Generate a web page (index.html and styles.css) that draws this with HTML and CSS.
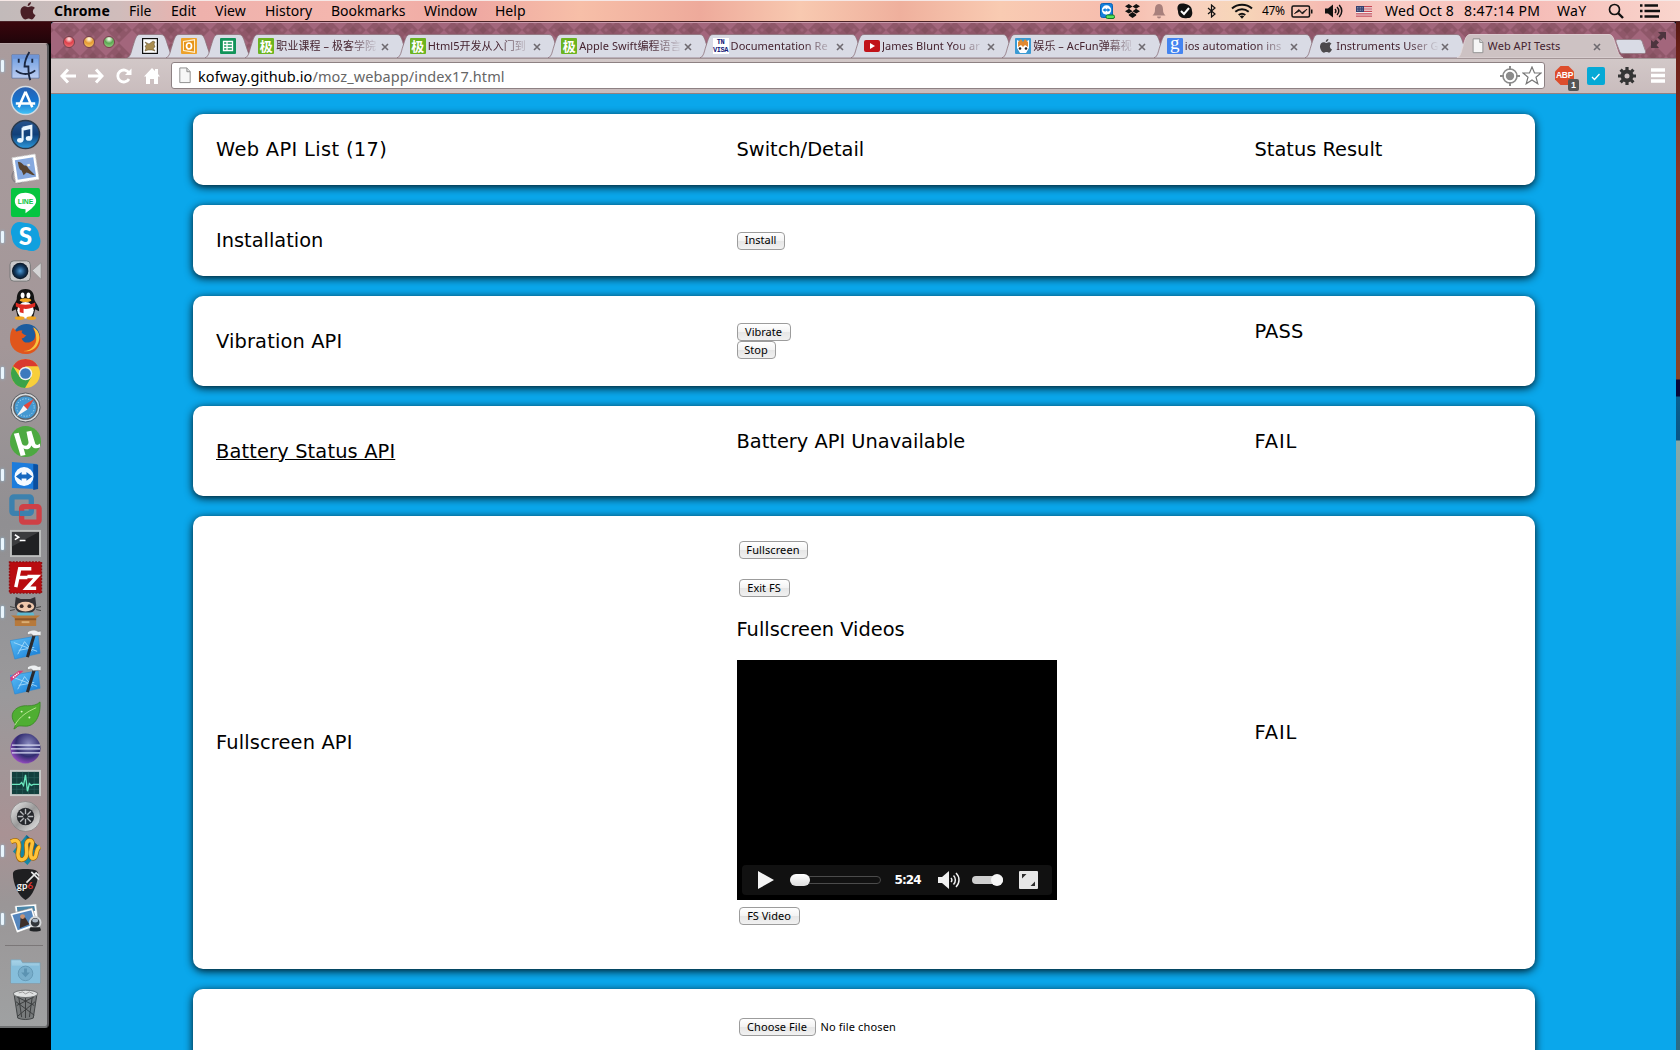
FILE: index.html
```
<!DOCTYPE html>
<html lang="en">
<head>
<meta charset="utf-8">
<title>Web API Tests</title>
<link rel="stylesheet" href="styles.css">
</head>
<body>
<svg class="defs" width="0" height="0" aria-hidden="true">
  <defs>
    <pattern id="damask" width="26" height="26" patternUnits="userSpaceOnUse" x="3" y="-6">
      <rect width="26" height="26" fill="#a3667c"/>
      <path d="M13 0 26 13 13 26 0 13Z" fill="#8f5769"/>
      <circle cx="13" cy="6" r="1.7" fill="#9d6377"/><circle cx="13" cy="20" r="1.7" fill="#9d6377"/>
      <circle cx="6" cy="13" r="1.7" fill="#9d6377"/><circle cx="20" cy="13" r="1.7" fill="#9d6377"/>
      <path d="M13 9l4 4-4 4-4-4Z" fill="#84505f"/>
    </pattern>
    <linearGradient id="blueball" x1="0" y1="0" x2="0" y2="1"><stop offset="0" stop-color="#2a5fae"/><stop offset=".5" stop-color="#1573cf"/><stop offset="1" stop-color="#44c4f7"/></linearGradient>
    <linearGradient id="navyball" x1="0" y1="0" x2="0" y2="1"><stop offset="0" stop-color="#27548e"/><stop offset=".5" stop-color="#104079"/><stop offset="1" stop-color="#2c9ade"/></linearGradient>
    <linearGradient id="silver" x1="0" y1="0" x2="1" y2="1"><stop offset="0" stop-color="#eee"/><stop offset=".5" stop-color="#999"/><stop offset="1" stop-color="#eee"/></linearGradient>
    <linearGradient id="finder" x1="0" y1="0" x2="0" y2="1"><stop offset="0" stop-color="#6a9be0"/><stop offset="1" stop-color="#bccdf1"/></linearGradient>
    <linearGradient id="blueprint" x1="0" y1="0" x2="1" y2="1"><stop offset="0" stop-color="#62c3f7"/><stop offset="1" stop-color="#1279d6"/></linearGradient>
    <linearGradient id="folder" x1="0" y1="0" x2="0" y2="1"><stop offset="0" stop-color="#a8d3e8"/><stop offset="1" stop-color="#6aa8c9"/></linearGradient>
    <radialGradient id="eclipse" cx=".6" cy=".35" r=".7"><stop offset="0" stop-color="#8a8cc0"/><stop offset=".6" stop-color="#312c70"/><stop offset="1" stop-color="#a04fc9"/></radialGradient>
    <radialGradient id="lens"><stop offset="0" stop-color="#4c9ad6"/><stop offset=".6" stop-color="#123a60"/><stop offset="1" stop-color="#0a1420"/></radialGradient>
    <symbol id="tab-wide" viewBox="0 0 166 24"><path d="M0 24C4 22 4 18 6 12S9 .5 13 .5H152C156 .5 157 6 159 12s3 10 7 12Z" fill="#d9dbe5" stroke="#8b7078" stroke-width=".8"/></symbol>
    <symbol id="tab-pin" viewBox="0 0 48 24"><path d="M0 24C4 22 4 18 6 12S9 .5 13 .5H34C38 .5 39 6 41 12s3 10 7 12Z" fill="#d9dbe5" stroke="#8b7078" stroke-width=".8"/></symbol>
    <symbol id="tab-live" viewBox="0 0 166 24"><path d="M0 24C4 22 4 18 6 12S9 .5 13 .5H152C156 .5 157 6 159 12s3 10 7 12Z" fill="#cdc2c3" stroke="#e5dcdd" stroke-width=".8"/></symbol>
    <symbol id="close" viewBox="0 0 8 8"><path d="M1 1 7 7M7 1 1 7" stroke="#6e6a70" stroke-width="1.6" fill="none"/></symbol>
    <symbol id="page" viewBox="0 0 14 18"><path d="M1.500 1H9l3.500 4V16.500H1.500Z" fill="#f6f6f6" stroke="#8b8b8b" stroke-width="1"/><path d="M9 1v4h3.500" fill="#ddd" stroke="#8b8b8b"/></symbol>
    <symbol id="apple" viewBox="0 0 16 18"><path d="M11 0c.2 2-1.500 4-3.300 4C7.500 2 9.200.3 11 0ZM8 5.200c.8 0 1.800-1 3.500-1 1.300 0 2.600.7 3.400 1.900-3 1.700-2.500 5.900.6 7-.7 1.900-2.200 4.300-3.700 4.300-1.200 0-1.600-.8-3.200-.8s-2 .8-3.200.8C3 17.400.5 13 .5 9.700.5 6 2.800 4.300 5 4.300c1.400 0 2.300.9 3 .9Z"/></symbol>
    <symbol id="xcode" viewBox="0 0 32 32"><path d="M0 11 29 6l2 18-26 6Z" fill="url(#blueprint)" stroke="#2387d5" stroke-width=".6"/><path d="M8 25 15 12l8 10M9 21l16-3M4 13l24 9" fill="none" stroke="#a8dcfb" stroke-width=".9"/><path d="M25 5 18 28" stroke="#2b2b2e" stroke-width="3.200"/><path d="M18 2.500C21-.5 26-.5 29 1.500l3-.5v5l-3-.5-5 .5-2-2-4 1Z" fill="#eef0f2" stroke="#777" stroke-width=".6"/></symbol>
  </defs>
</svg>

<header class="menubar">
  <svg class="mb-apple" width="16" height="18"><use href="#apple"/></svg>
  <nav class="mb-menus">
    <b class="w-chrome">Chrome</b><span class="w-file">File</span><span class="w-edit">Edit</span><span class="w-view">View</span><span class="w-history">History</span><span class="w-book">Bookmarks</span><span class="w-window">Window</span><span>Help</span>
  </nav>
  <div class="mb-status">
    <svg class="st-tv" width="15" height="16" viewBox="0 0 15 16"><rect x=".5" y=".5" width="12" height="14" rx="2" fill="#1480dc" stroke="#0b62b4"/><circle cx="6.500" cy="7" r="4.700" fill="#fff"/><path d="M2.500 7l3-2v1.300h2V5l3 2-3 2V7.700h-2V9Z" fill="#1480dc"/><rect x="6" y="12" width="8.500" height="3.500" rx="1.500" fill="#52e35b" stroke="#167722"/></svg>
    <svg class="st-db" width="17" height="16" viewBox="0 0 17 15"><path d="M4.800.5 8.500 3 5 5.300 1 2.800ZM12.200.5 8.500 3 12 5.300l4-2.500ZM1 7.700l4-2.400L8.500 7.700 4.800 10ZM16 7.700l-4-2.400-3.500 2.400L12.200 10ZM4.800 11l3.700-2.400L12.200 11v1L8.500 14.500 4.800 12Z"/></svg>
    <svg class="st-bell" width="14" height="15" viewBox="0 0 14 15"><path d="M7 0c3 .3 4 2.600 4 5.500 0 3 .8 4.500 2.500 6H.5C2.200 10 3 8.500 3 5.500 3 2.600 4 .3 7 0ZM5 12.500h4a2 2 0 0 1-4 0Z" fill="#a8807c"/></svg>
    <svg class="st-sky" width="16" height="16" viewBox="0 0 16 16"><path d="M5 .5c5 0 10 2 10 7.500 1 3-.5 7.500-4.500 7C4 16 1 13 1 8-.5 4 1 .5 5 .5Z" fill="#121212"/><path d="M4 8l3 3 5-6" fill="none" stroke="#fff" stroke-width="2"/></svg>
    <svg class="st-bt" width="9" height="14" viewBox="0 0 9 14"><path d="M1 4l7 6-3.500 3V1L8 4 1 10" fill="none" stroke="#111" stroke-width="1.200"/></svg>
    <svg class="st-wifi" width="22" height="16" viewBox="0 0 22 16"><g fill="none" stroke="#111" stroke-width="2"><path d="M1 5.500C6.500.5 15.500.5 21 5.500"/><path d="M4.300 8.800c4-3.300 9.400-3.300 13.400 0"/><path d="M7.700 12c2-1.600 4.600-1.600 6.600 0"/></g><path d="M8.800 13.300c1.300-1 3.100-1 4.400 0L11 15.800Z"/></svg>
    <span class="st-pct">47%</span>
    <svg class="st-bat" width="22" height="13" viewBox="0 0 22 13"><rect x="1" y="1" width="17.500" height="11" rx="1.500" fill="none" stroke="#111" stroke-width="1.500"/><path d="M20 4.500h1.500v4H20Z"/><path d="M3.500 8.500 8 4.500l3 3.200 5-3.500-4.500 4.900-3-3Z" stroke="#111" stroke-width=".8"/></svg>
    <svg class="st-vol" width="19" height="14" viewBox="0 0 19 14"><path d="M1 4.500h3L9 .5v13L4 9.500H1Z"/><g fill="none" stroke="#111" stroke-width="1.500"><path d="M11 5c1.200 1.200 1.200 3 0 4M13 3c2.400 2.300 2.400 6 0 8M15.200 1c3.400 3.600 3.400 8.500 0 12"/></g></svg>
    <svg class="st-flag" width="16" height="11" viewBox="0 0 16 11"><path fill="#f2eaea" d="M0 0h16v11H0Z"/><path d="M0 .7h16M0 3h16M0 5.400h16M0 7.800h16M0 10.200h16" stroke="#c64654" stroke-width="1.200"/><path fill="#34406f" d="M0 0h8v6H0Z"/><path d="M1 1.500h6M1 3h6M1 4.500h6" stroke="#c9cce0" stroke-width=".6" stroke-dasharray=".8 .8"/></svg>
    <span class="st-date">Wed Oct 8</span>
    <span class="st-time">8:47:14 PM</span>
    <span class="st-user">WaY</span>
    <svg class="st-find" width="16" height="16" viewBox="0 0 16 16"><circle cx="6.500" cy="6.500" r="5" fill="none" stroke="#111" stroke-width="1.700"/><path d="M10 10l5 5" stroke="#111" stroke-width="2.400"/></svg>
    <svg class="st-list" width="20" height="14" viewBox="0 0 20 14"><path d="M0 1.500h2.500M0 7h2.500M0 12.500h2.500M4.500 1.500H18M4.500 7H20M4.500 12.500H19" stroke="#111" stroke-width="2.600"/></svg>
  </div>
</header>

<div class="desktop">
<aside class="dock-col">
<div class="dock">
  <div class="app run"><svg viewBox="0 0 32 32"><path d="M2 4h28v24H2Z" fill="url(#finder)" stroke="#44639c" stroke-width=".6"/><path d="M2 4h28v4H2Z" fill="#6f95d6"/><path d="M20 1c-3 5-5 9-5 15h4c0 5 0 10 2 14M6 20c6 5 14 5 20 0M9 8v4M23 8v4" fill="none" stroke="#1b2741" stroke-width="1.900"/></svg></div>
  <div class="app"><svg viewBox="0 0 32 32"><circle cx="16" cy="16" r="14.500" fill="url(#blueball)" stroke="#d4dbe2" stroke-width="1.500"/><path d="M16 7 9 23M16 7l7 16M6 19h20" stroke="#fff" stroke-width="2.600" fill="none"/></svg></div>
  <div class="app"><svg viewBox="0 0 32 32"><circle cx="16" cy="16" r="14.500" fill="url(#navyball)" stroke="#2b3a4b" stroke-width="1.500"/><path d="M13 9l9-2v13M13 9v13M13 11l9-2" fill="none" stroke="#e9f6ff" stroke-width="2.200"/><ellipse cx="10.500" cy="22" rx="3.200" ry="2.500" fill="#e9f6ff"/><ellipse cx="19.500" cy="20" rx="3.200" ry="2.500" fill="#e9f6ff"/></svg></div>
  <div class="app"><svg viewBox="0 0 32 32"><circle cx="9" cy="24" r="7" fill="none" stroke="#858087" stroke-width="1.500"/><path d="M2 5 26 1l4 26-24 4Z" fill="#fff" stroke="#ccc" stroke-dasharray="1.500 1"/><path d="M5 7.500 24 4.500l3 20-19 3.200Z" fill="#86a9df"/><path d="M8 9c4 0 5 3 7 4 3 0 3 2 5 4l6 6c-4 0-7-3-9-3l-3 3-2-5c-3-1-3-5-4-9Z" fill="#57432f"/><path d="M17 12l3-1 1 2-2 1Z" fill="#f4efe2"/></svg></div>
  <div class="app"><svg viewBox="0 0 32 32"><rect x="1" y="1" width="30" height="30" rx="2" fill="#05c540"/><path d="M16 6c7 0 11 3.800 11 8.500 0 4-4.500 8-11 12.500v-4C9 23 5 19.500 5 14.500S9 6 16 6Z" fill="#fff"/><text x="16" y="17.500" text-anchor="middle" class="ic-line">LINE</text></svg></div>
  <div class="app run"><svg viewBox="0 0 32 32"><path d="M10 1c3 0 4 1 6 1 8 0 14 6 14 13 2 4 2 8 0 12-3 4-8 5-13 3C9 30 2 24 2 16-1 9 3 1 10 1Z" fill="#10a0df"/><text x="16" y="24.500" text-anchor="middle" class="ic-skype">S</text></svg></div>
  <div class="app"><svg viewBox="0 0 32 32"><rect x="0" y="6" width="21" height="21" rx="4" fill="#c9c9ca" stroke="#777"/><path d="M23 16l9-8v17Z" fill="#d5d5d6" stroke="#888" stroke-width=".6"/><circle cx="10.500" cy="16.500" r="8.500" fill="url(#lens)"/></svg></div>
  <div class="app"><svg viewBox="0 0 32 32"><path d="M16 0c7 0 9 5 9 10 0 3 6 8 5 13l-4-2-2 8H8l-2-8-4 2c-1-5 5-10 5-13C7 5 9 0 16 0Z" fill="#131313"/><ellipse cx="16" cy="22" rx="8.500" ry="8.500" fill="#fff"/><ellipse cx="13" cy="6.500" rx="2" ry="3" fill="#fff"/><ellipse cx="19" cy="6.500" rx="2" ry="3" fill="#fff"/><ellipse cx="16" cy="11.500" rx="6" ry="2" fill="#f0a521"/><path d="M6 14c6 3 14 3 20 0v4c-4 2-8 3-12 2.500V25l-4-1v-4.500L6 18Z" fill="#df2b22"/><ellipse cx="10" cy="30" rx="5" ry="2" fill="#f0a521"/><ellipse cx="22" cy="30" rx="5" ry="2" fill="#f0a521"/></svg></div>
  <div class="app"><svg viewBox="0 0 32 32"><circle cx="17" cy="15" r="14" fill="#1c5c9f"/><path d="M3 5l4 4c3-2 5-1 6-1-3 2 2 4 4 5-2 1-2 3-5 3 2 6 9 5 13 1 2-4 1-9-2-12 7 3 9 9 8 15-2 8-8 12-15 12C7 32 0 25 0 17 0 12 1 8 3 5Z" fill="#e0561c"/><path d="M24 4c7 4 8 12 4 19-3 5-9 7-14 6 8 0 14-7 13-14 0-5-2-8-3-11Z" fill="#f9c440"/></svg></div>
  <div class="app run"><svg viewBox="0 0 32 32"><circle cx="16" cy="16" r="15" fill="#f8cf3b"/><path d="M16 16 3 8.500A15 15 0 0 1 29 8.500H16Z" fill="#d93a2f"/><path d="M3 8.500A15 15 0 0 0 15.500 31L22 19.500H10Z" fill="#3ba349"/><circle cx="16" cy="16" r="7" fill="#efefef"/><circle cx="16" cy="16" r="5.500" fill="#3d79bd"/></svg></div>
  <div class="app"><svg viewBox="0 0 32 32"><circle cx="16" cy="16" r="15" fill="#d7d9db" stroke="#54585c"/><circle cx="16" cy="16" r="12" fill="#4398d1" stroke="#5a6066" stroke-width="1.500"/><circle cx="16" cy="16" r="9" fill="none" stroke="#cbe6f5" stroke-dasharray="1 2"/><path d="M25 7 18 18l-4-4Z" fill="#e2473a"/><path d="M7 25l7-11 4 4Z" fill="#f4f4f4"/></svg></div>
  <div class="app"><svg viewBox="0 0 32 32"><circle cx="16" cy="16" r="16" fill="#4da941"/><path d="M4 8l5-1 3 10c1 5 8 4 7-1L17 6l5-1 4 13c1 2 3 2 5 0v4c-4 2-7 1-9-2-1 4-6 5-8 3l2 7-5 1Z" fill="#fff"/></svg></div>
  <div class="app run"><svg viewBox="0 0 32 32"><path d="M2 2 28 4v26L2 29Z" fill="#1c7cdc"/><path d="M24 4l5 1v25l-5 1Z" fill="#0b4f9f"/><circle cx="14.500" cy="17" r="9.800" fill="#f5faff"/><path d="M6 17l6-4.500V15h5v-2.500L23 17l-6 4.500V19h-5v2.500Z" fill="#1668c0"/></svg></div>
  <div class="app"><svg viewBox="0 0 32 32"><rect x="2" y="3" width="20" height="17" rx="2" fill="none" stroke="#3c81ae" stroke-width="5.500"/><rect x="12" y="13" width="18" height="16" rx="2" fill="none" stroke="#cf4046" stroke-width="5.500"/><path d="M10 20h9" fill="none" stroke="#3c81ae" stroke-width="5.500"/></svg></div>
  <div class="app run"><svg viewBox="0 0 32 32"><rect x="1" y="3" width="30" height="26" fill="#202123" stroke="#bdbfbe" stroke-width="2"/><path d="M2 4h28L2 19Z" fill="#3b3c3e"/><path d="M5 7l4 2.500L5 12M10 13h6" fill="none" stroke="#fff" stroke-width="1.600"/></svg></div>
  <div class="app"><svg viewBox="0 0 32 32"><rect x="-.5" y="0" width="33" height="32" fill="#b90c10" stroke="#911013" stroke-dasharray="2 1.300" stroke-width="1.500"/><path d="M6 26 10 7h12M9 16h9M18 15h10L17 27h10" fill="none" stroke="#fff" stroke-width="3.600"/></svg></div>
  <div class="app run"><svg viewBox="0 0 32 32"><path d="M6 1l5 2h10l5-2 1 8c0 6-4 9-11 9S5 15 5 9Z" fill="#343136"/><ellipse cx="16" cy="11" rx="9" ry="5" fill="#f0c8ad"/><circle cx="12" cy="10.500" r="2" fill="#3b2c2a"/><circle cx="20" cy="10.500" r="2" fill="#3b2c2a"/><path d="M0 11l5 1M0 15l5-1M32 11l-5 1M32 15l-5-1" stroke="#444"/><path d="M8 17h16l2 5H6Z" fill="#5cb8d2"/><path d="M1 20h30l-4 3v8H5v-8Z" fill="#b7793b"/><path d="M5 23h22v2H5Z" fill="#89562a"/><path d="M12 26h8v2h-8Z" fill="#d9ad73"/></svg></div>
  <div class="app"><svg viewBox="0 0 32 32"><use href="#xcode"/></svg></div>
  <div class="app"><svg viewBox="0 0 32 32"><use href="#xcode"/><path d="M0 13 9 6h5L1 17Z" fill="#db3b78"/><path d="M3 13l6-5" stroke="#fff" stroke-dasharray="1.500 .7" stroke-width="1.500"/></svg></div>
  <div class="app"><svg viewBox="0 0 32 32"><path d="M31 3c1 14-5 26-16 25-4 0-7-1-9 2l-2 1c1-3 2-4 1-6C-3 14 8 6 18 7 24 7 28 6 31 3Z" fill="#4fae32" stroke="#2f7e1c" stroke-width=".7"/><path d="M5 27C10 18 18 13 27 9" fill="none" stroke="#b6e490"/><circle cx="12" cy="13" r="1" fill="#dff6c6"/><circle cx="20" cy="19" r="1" fill="#dff6c6"/></svg></div>
  <div class="app"><svg viewBox="0 0 32 32"><circle cx="16" cy="16" r="15.500" fill="url(#eclipse)"/><path d="M2 12.500h29M1 16.500h30M2 20.500h29" stroke="#d9dcf3" stroke-width="1.300"/></svg></div>
  <div class="app"><svg viewBox="0 0 32 32"><rect x="1" y="4" width="30" height="25" fill="#123f3d" stroke="#c8cbca" stroke-width="2"/><path d="M7 5v23M13 5v23M19 5v23M25 5v23M2 11h28M2 23h28" stroke="#2b6560" stroke-width=".6"/><path d="M2 18h8l2-2 2 3 2-11 2 17 2-8 2 2 2-1h6" fill="none" stroke="#6ae7be" stroke-width="1.400"/></svg></div>
  <div class="app"><svg viewBox="0 0 32 32"><circle cx="16" cy="16" r="15.500" fill="url(#silver)" stroke="#777" stroke-width=".6"/><circle cx="16" cy="16" r="9" fill="#24272b"/><path d="M16 8v16M8 16h16M10.500 10.500l11 11M21.500 10.500l-11 11" stroke="#b6b9bc" stroke-width="1.400"/><circle cx="16" cy="16" r="2.500" fill="#24272b"/></svg></div>
  <div class="app run"><svg viewBox="0 0 32 32"><path d="M17 0 32 14 18 31 3 17Z" fill="#1787a6"/><path d="M17 0 32 14 18 17Z" fill="#155f86"/><path d="M1 7c8-4 9 2 8 8-2 7 0 12 5 10 6-3 2-13 3-16 1-5 7-4 6 0-2 8-3 15 1 15 5 0 1-9 7-12" fill="none" stroke="#a46606" stroke-width="5"/><path d="M1 7c8-4 9 2 8 8-2 7 0 12 5 10 6-3 2-13 3-16 1-5 7-4 6 0-2 8-3 15 1 15 5 0 1-9 7-12" fill="none" stroke="#ffc33a" stroke-width="3.500"/></svg></div>
  <div class="app"><svg viewBox="0 0 32 32"><path d="M16 0c8 0 13 1 13 5 0 10-6 24-13 27C9 29 3 15 3 5c0-4 5-5 13-5Z" fill="#1f1f21"/><path d="M17 14 27 4l3 3M22 3l8 8" stroke="#e6e6e6" stroke-width="1.700" fill="none"/><text x="7" y="21" class="ic-gp">gp<tspan fill="#d9322c">6</tspan></text></svg></div>
  <div class="app run"><svg viewBox="0 0 32 32"><path d="M5 3l22-2 2 17-22 3Z" fill="#fff" stroke="#aaa" stroke-width=".5"/><path d="M7 4l18-1 1 5-18 3Z" fill="#4b86a8"/><path d="M0 11l23-6 6 18-22 8Z" fill="#fff" stroke="#888" stroke-width=".6"/><path d="M2.500 12.500 22 7.500l4 14-18 6.500Z" fill="#5586bd"/><path d="M11 15l4-1 5 8-10 4Z" fill="#3d2e29"/><circle cx="13" cy="14" r="2.500" fill="#c99373"/><circle cx="26" cy="20" r="5.500" fill="#31353a" stroke="#d5d8da" stroke-width="2"/><ellipse cx="26" cy="18" rx="3" ry="2" fill="#aab6c3"/><path d="M21 25l10 0 1 3c-3 2-9 2-12 0Z" fill="#202326"/></svg></div>
  <hr class="dock-rule">
  <div class="app place"><svg viewBox="0 0 32 32"><path d="M1 5h10l2 3h18v21H1Z" fill="url(#folder)" stroke="#6c9fba" stroke-width=".6"/><path d="M1 11h30v18H1Z" fill="#86bedb"/><circle cx="16" cy="19" r="7.500" fill="#78aecb" stroke="#6499b6"/><path d="M14.500 14h3v4h3L16 23l-4.500-5h3Z" fill="#5c93b2"/></svg></div>
  <div class="app place"><svg viewBox="0 0 32 32"><path d="M4 4h24l-4 26c-4 2-12 2-16 0Z" fill="#777a7b" stroke="#3e4142"/><path d="M9 8l3 21M16 8v22M23 8l-3 21M6 13l19 14M26 13 8 28M7 8l18 9M25 8 7 17" stroke="#3b3d3e" stroke-width="1"/><ellipse cx="16" cy="5" rx="12.500" ry="3.800" fill="#dfe1e1" stroke="#6b6e6f"/><path d="M9 4l4-1 3 2 4-2 4 2" fill="none" stroke="#999" stroke-width="1"/></svg></div>
</div>
</aside>

<main class="window">
  <div class="strip">
    <svg class="strip-bg" width="1625" height="38"><rect width="1625" height="38" fill="url(#damask)"/></svg>
    <div class="lights"><i class="red"></i><i class="amber"></i><i class="green"></i></div>
    <div class="tabs">
      <div class="tab pin"><svg class="shape"><use href="#tab-pin"/></svg><svg class="fav" viewBox="0 0 16 16"><rect x=".6" y=".6" width="14.800" height="14.800" fill="#fff" stroke="#111" stroke-width="1.200"/><path d="M3 4l2 1 2 1 4-3 2 1-1 2 1 3-2 1 2 3-3-1-4 0-3 1 1-3-1-2 2-1Z" fill="#a98d50" stroke="#5b4a2b" stroke-width=".5"/></svg></div>
      <div class="tab pin"><svg class="shape"><use href="#tab-pin"/></svg><svg class="fav" viewBox="0 0 16 16"><rect width="16" height="16" rx="1" fill="#eda22c"/><path d="M2 3l12-2v14L2 13Z" fill="#fff0cf"/><path d="M3 4l10-1.500v11L3 12Z" fill="#e7941a"/><ellipse cx="8" cy="8" rx="2.500" ry="3" fill="none" stroke="#fff" stroke-width="1.700"/></svg></div>
      <div class="tab pin"><svg class="shape"><use href="#tab-pin"/></svg><svg class="fav" viewBox="0 0 16 16"><rect width="16" height="16" rx="1" fill="#12945a"/><path d="M3.500 3.500h9v9h-9ZM3.500 6.500h9M3.500 9.500h9M7 3.500v9" fill="none" stroke="#fff" stroke-width="1.300"/></svg></div>
      <div class="tab"><svg class="shape"><use href="#tab-wide"/></svg><span class="fav jike">极</span><span class="t">职业课程 – 极客学院</span><svg class="x"><use href="#close"/></svg></div>
      <div class="tab"><svg class="shape"><use href="#tab-wide"/></svg><span class="fav jike">极</span><span class="t">Html5开发从入门到</span><svg class="x"><use href="#close"/></svg></div>
      <div class="tab"><svg class="shape"><use href="#tab-wide"/></svg><span class="fav jike">极</span><span class="t">Apple Swift编程语言</span><svg class="x"><use href="#close"/></svg></div>
      <div class="tab"><svg class="shape"><use href="#tab-wide"/></svg><span class="fav visa">TN<br>VISA</span><span class="t">Documentation Re</span><svg class="x"><use href="#close"/></svg></div>
      <div class="tab"><svg class="shape"><use href="#tab-wide"/></svg><svg class="fav" viewBox="0 0 16 16"><rect y="2" width="16" height="12" rx="2" fill="#c11218"/><path d="M6 5l5 3-5 3Z" fill="#fff"/></svg><span class="t">James Blunt You ar</span><svg class="x"><use href="#close"/></svg></div>
      <div class="tab"><svg class="shape"><use href="#tab-wide"/></svg><svg class="fav" viewBox="0 0 16 16"><rect width="16" height="16" rx="1" fill="#3a9ad3"/><path d="M2 2l4 2h4l4-2v8l-3 5H5L2 10Z" fill="#fff"/><path d="M3 4l3-3 2 3 2-3 3 3v5l-3-2-2 2-2-2-3 2Z" fill="#e08a32"/><circle cx="5" cy="10.500" r="1.300" fill="#222"/><circle cx="11" cy="10.500" r="1.300" fill="#222"/></svg><span class="t">娱乐 – AcFun弹幕视</span><svg class="x"><use href="#close"/></svg></div>
      <div class="tab"><svg class="shape"><use href="#tab-wide"/></svg><span class="fav goog">g</span><span class="t">ios automation ins</span><svg class="x"><use href="#close"/></svg></div>
      <div class="tab"><svg class="shape"><use href="#tab-wide"/></svg><svg class="fav" viewBox="-2 0 20 18" fill="#4c4a4d"><use href="#apple" width="16" height="18"/></svg><span class="t">Instruments User G</span><svg class="x"><use href="#close"/></svg></div>
      <div class="tab live"><svg class="shape"><use href="#tab-live"/></svg><svg class="fav"><use href="#page"/></svg><span class="t">Web API Tests</span><svg class="x"><use href="#close"/></svg></div>
    </div>
    <svg class="newtab" width="31" height="15" viewBox="0 0 31 15"><path d="M3 .5h21c2 0 3 1 3.500 3l3 8.500c.5 1.500 0 2.500-1.500 2.500H8c-2 0-3-.5-3.600-2.500L1 3C.5 1.500 1 .5 3 .5Z" fill="#d9dbe5" stroke="#99808a"/></svg>
    <svg class="expand" width="15" height="16" viewBox="0 0 15 16"><path d="M7 0h8v8l-2.500-2.500L9.500 8.500 6.500 5.500l3-3ZM0 8l2.500 2L5 7.500l3 3L5.500 13 8 16H0Z" fill="#4d343e"/></svg>
  </div>
  <div class="toolbar">
    <svg width="16" height="16" viewBox="0 0 16 16"><path d="M8 1.500 2 8l6 6.500M2 8h14" fill="none" stroke="#fff" stroke-width="3"/></svg>
    <svg width="16" height="16" viewBox="0 0 16 16"><path d="M8 1.500 14 8l-6 6.500M14 8H0" fill="none" stroke="#fff" stroke-width="3"/></svg>
    <svg width="16" height="16" viewBox="0 0 16 16"><path d="M13 11a6 6 0 1 1 0-6" fill="none" stroke="#fff" stroke-width="2.800"/><path d="M15.500.5V7H9Z" fill="#fff"/></svg>
    <svg width="16" height="16" viewBox="0 0 16 16"><path d="M8 0l3 3V1h3v5l2 2.500h-2V16h-4v-5H6v5H2V8.500H0Z" fill="#fff"/></svg>
    <div class="omnibox">
      <svg class="ob-page" width="14" height="17"><use href="#page"/></svg>
      <span class="url"><span class="host">kofway.github.io</span>/moz_webapp/index17.html</span>
      <svg class="ob-target" width="20" height="20" viewBox="0 0 20 20"><circle cx="10" cy="10" r="7" fill="none" stroke="#8b8b8b" stroke-width="1.600"/><circle cx="10" cy="10" r="4.200" fill="#8b8b8b"/><path d="M10 0v4M10 16v4M0 10h4M16 10h4" stroke="#8b8b8b" stroke-width="2"/></svg>
      <svg class="ob-star" width="20" height="19" viewBox="0 0 20 19"><path d="M10 1l2.500 6H19l-5 4.200 1.800 6.600L10 14l-5.800 3.800L6 11.200 1 7h6.500Z" fill="#fff" stroke="#777" stroke-width="1.200"/></svg>
    </div>
    <div class="abp"><svg width="19" height="19" viewBox="0 0 19 19"><path d="M5.500 0h8L19 5.500v8L13.500 19h-8L0 13.500v-8Z" fill="#dd4d2c"/></svg><b>ABP</b><em>1</em></div>
    <svg class="chk" width="18" height="18" viewBox="0 0 18 18"><rect width="18" height="18" rx="2" fill="#05a9d6"/><path d="M5 10l2.500 2.500L12.500 7" fill="none" stroke="#fff" stroke-width="1.300"/></svg>
    <svg class="gear" width="18" height="18" viewBox="0 0 18 18"><circle cx="9" cy="9" r="4.500" fill="none" stroke="#353535" stroke-width="4"/><path d="M9 0v4M9 14v4M0 9h4M14 9h4M2.600 2.600l3 3M12.400 12.400l3 3M15.400 2.600l-3 3M5.600 12.400l-3 3" stroke="#353535" stroke-width="3.200"/></svg>
    <svg class="burger" width="14" height="15" viewBox="0 0 14 15"><path d="M0 2h14M0 7.500h14M0 13h14" stroke="#fff" stroke-width="3.600"/></svg>
  </div>

  <div class="page">
    <section class="card"><div class="wide">Web API List (17)</div><div>Switch/Detail</div><div>Status Result</div></section>
    <section class="card"><div>Installation</div><div class="tight"><button class="b-install">Install</button></div><div></div></section>
    <section class="card mid"><div class="api">Vibration API</div><div class="tight"><button class="b-vib">Vibrate</button><button class="b-stop">Stop</button></div><div class="up api">PASS</div></section>
    <section class="card mid"><div class="api"><u>Battery Status API</u></div><div class="up">Battery API Unavailable</div><div class="up fail">FAIL</div></section>
    <section class="card big"><div class="api">Fullscreen API</div>
      <div class="media">
        <button class="b-full">Fullscreen</button>
        <button class="b-exit">Exit FS</button>
        <p>Fullscreen Videos</p>
        <div class="video">
          <div class="controls">
            <svg class="c-play" width="16" height="18" viewBox="0 0 16 18"><path d="M0 0l16 9L0 18Z" fill="#f3f3f3"/></svg>
            <div class="seek"><i></i></div>
            <span class="clock">5:24</span>
            <svg class="c-vol" width="22" height="18" viewBox="0 0 22 18"><path d="M0 6h4L11 0v18L4 12H0Z" fill="#f0f0f0"/><g fill="none" stroke="#f0f0f0" stroke-width="1.500"><path d="M13 7c1.200 1.200 1.200 3 0 4M15.500 4.500c2.500 2.500 2.500 6.500 0 9M18 2c4 4 4 10 0 14"/></g></svg>
            <div class="level"><i></i></div>
            <svg class="c-fs" width="19" height="18" viewBox="0 0 19 18"><rect width="19" height="18" rx="1" fill="#e6e6e6"/><path d="M3 3h4.500L3 7.500ZM16 15h-4.500L16 10.500Z" fill="#2c2c2c"/></svg>
          </div>
        </div>
        <button class="b-fsv">FS Video</button>
      </div>
      <div class="up fail">FAIL</div></section>
    <section class="card last"><div></div><div class="pick"><button class="b-file">Choose File</button><span>No file chosen</span></div><div></div></section>
  </div>
</main>
<div class="wall-right"></div>
</div>
</body>
</html>
```
FILE: styles.css
```
* { box-sizing: border-box; }
body { margin: 0; width: 1680px; height: 1050px; overflow: hidden; display: flex; flex-direction: column; background: #000; color: #000; font-family: "Noto Sans", "Noto Sans CJK SC", sans-serif; }
svg { display: block; flex: none; }
.defs { position: absolute; }

.menubar { height: 22px; flex: none; display: flex; align-items: center; justify-content: space-between; padding: 0 20px 0 20px; font-size: 14px; line-height: 20px; white-space: nowrap; border-bottom: 1px solid #4a2227; border-top: 1px solid #f6e8e6;
  background: linear-gradient(90deg, #c2baba 0, #d0bcbb 120px, #eeb1ac 200px, #f4b6ae 330px, #efa9a2 480px, #f7bfa8 580px, #eeaa9b 700px, #f8c9b0 800px, #efb09d 900px, #f9cbb2 1000px, #f6bcae 1120px, #f8cfc0 1180px, #f7d6b8 1240px, #f5b9b2 1330px, #f9cdc6 1400px, #f5bab5 1520px, #f9d5cd 1680px); }
.mb-apple { fill: #4a1f26; margin-right: 18px; }
.mb-menus { display: flex; flex: 1; }
.mb-menus b { font-weight: 700; letter-spacing: .2px; }
.w-chrome { width: 75px; }
.w-file { width: 42px; }
.w-edit { width: 44px; }
.w-view { width: 50px; }
.w-history { width: 66px; }
.w-book { width: 93px; }
.w-window { width: 71px; }
.mb-status { display: flex; align-items: center; fill: #111; }
.st-tv { margin-right: 9px; }
.st-db { margin-right: 11px; }
.st-bell { margin-right: 11px; }
.st-sky { margin-right: 14px; }
.st-bt { margin-right: 15px; }
.st-wifi { margin-right: 9px; }
.st-pct { width: 29px; font-size: 12px; letter-spacing: -.4px; }
.st-bat { margin-right: 11px; }
.st-vol { margin-right: 13px; }
.st-flag { margin-right: 13px; }
.st-date { width: 79px; letter-spacing: .2px; }
.st-time { width: 93px; letter-spacing: .4px; }
.st-user { width: 51px; letter-spacing: .3px; }
.st-find { margin-right: 16px; }

.desktop { flex: 1; display: flex; min-height: 0; background: #050406; }
.dock-col { width: 51px; flex: none; padding-top: 21px; background: linear-gradient(#3a060c, #20050a 21px, #000 22px); }
.dock { width: 49px; height: 985px; padding: 5px 0 0 10px; border-right: 2px solid #565558; border-bottom: 2px solid #707273; border-top: 1px solid #b9a9aa; border-radius: 0 4px 4px 0; background: linear-gradient(#aa9c9d, #a39799 300px, #908f92 480px, #9a999b 650px, #a99294 790px, #9a9697 860px, #9fa1a2); }
.app { height: 34.12px; width: 31px; display: flex; align-items: center; position: relative; }
.app svg { width: 31px; height: 31px; overflow: visible; }
.run::before { content: ""; position: absolute; left: -9px; top: 11px; width: 3px; height: 12px; border-radius: 1px; background: #e9f5fd; box-shadow: 0 0 3px #8fc3e6; }
.dock-rule { margin: 9px 4px 8px -5px; border: 0; border-top: 1px solid #7b7778; }
.place { height: 33.500px; }
.ic-line { font: 700 7px "Liberation Sans", sans-serif; fill: #05c540; }
.ic-skype { font: 900 25px Lato, sans-serif; fill: #fff; }
.ic-gp { font: 700 10px Lato, sans-serif; fill: #f2f2f2; }

.window { width: 1625px; flex: none; display: flex; flex-direction: column; overflow: hidden; border-radius: 4px 4px 0 0; background: #0aa7eb; }
.strip { height: 36px; flex: none; display: flex; align-items: flex-end; position: relative; border-top: 1px solid #c99cac; background: #a3667c; padding-left: 12px; overflow: hidden; }
.strip-bg { position: absolute; left: 0; top: 0; width: 1625px; }
.lights { position: relative; display: flex; gap: 8px; padding-bottom: 10px; width: 64px; }
.lights i { width: 12px; height: 12px; border-radius: 50%; border: 1px solid #75404b; }
.red { background: radial-gradient(circle at 50% 20%, #fbd2d2 10%, #e0404a 45%, #f38487); }
.amber { background: radial-gradient(circle at 50% 20%, #fff0cf 10%, #e69a31 45%, #fbd277); }
.green { background: radial-gradient(circle at 50% 20%, #e6f8dc 10%, #5ba852 45%, #a6e093); }
.tabs { position: relative; display: flex; height: 24px; }
.tab { position: relative; width: 166px; height: 24px; margin-right: -14.6px; padding-left: 13px; display: flex; align-items: center; }
.tab.pin { width: 48px; margin-right: -8.900px; padding-left: 15px; }
.tab.pin + .tab:not(.pin) { margin-left: 1px; }
.shape { position: absolute; left: 0; top: 0; width: 100%; height: 24px; }
.tab.live { z-index: 2; margin-right: 0; }
.fav { position: relative; width: 16px; height: 16px; flex: none; margin-right: 2px; }
.jike { background: #6cb420; border-radius: 1px; color: #fff; font: 700 13px/16px "Noto Sans CJK SC", sans-serif; text-align: center; }
.visa { background: #fff; color: #151a78; font: 700 7px/8px "Liberation Mono", monospace; text-align: center; letter-spacing: -.4px; }
.goog { background: #4484f0; border-radius: 1px; color: #fff; font: 19px/10px "Liberation Serif", serif; text-align: center; }
.t { position: relative; width: 104px; height: 18px; overflow: hidden; white-space: nowrap; color: #45232f; font-size: 11px; line-height: 18px; letter-spacing: .05px; -webkit-mask-image: linear-gradient(90deg, #000 72px, transparent 103px); mask-image: linear-gradient(90deg, #000 72px, transparent 103px); }
.live .t { -webkit-mask-image: none; mask-image: none; }
.x { position: absolute; left: 136px; top: 9px; width: 8px; height: 8px; }
.newtab { position: relative; margin: 0 0 4px -8px; }
.expand { position: absolute; right: 10px; top: 9px; }

.toolbar { height: 36px; flex: none; display: flex; align-items: center; gap: 12px; padding: 0 0 1px 9px; background: linear-gradient(#d2c8c8, #c9bcbd); border-top: 1px solid #a29496; border-bottom: 1px solid #947f80; }
.omnibox { width: 1374px; height: 27px; margin-left: -1px; background: #fff; border: 1px solid #8d8183; border-radius: 3px; display: flex; align-items: center; padding: 0 2px 0 6px; }
.url { flex: 1; margin-left: 6px; font-size: 14.500px; line-height: 20px; letter-spacing: .1px; color: #666; white-space: nowrap; }
.host { color: #000; }
.ob-target { margin-right: 2px; }
.abp { position: relative; width: 22px; height: 19px; margin-left: -2px; }
.abp b { position: absolute; left: 1px; top: 4px; font: 700 8.500px/11px "Liberation Sans", sans-serif; color: #fff; letter-spacing: -.3px; }
.abp em { position: absolute; left: 13px; top: 13px; width: 11px; height: 12px; border-radius: 2px; background: #555; color: #fff; font: 700 9px/12px "Liberation Sans", sans-serif; text-align: center; }
.chk { margin-left: -2px; }
.gear { margin-left: 1px; }
.burger { margin-left: 3px; }

.page { flex: 1; padding: 20px 141px 0 142px; display: flex; flex-direction: column; gap: 20px; background: #0aa7eb; font: 19.400px/23px "DejaVu Sans", sans-serif; }
.card { flex: none; height: 71px; padding: 24px 0 24px 23px; display: grid; grid-template-columns: 520.500px 518px 1fr; align-items: center; background: #fff; border-radius: 10px; box-shadow: 0 2px 9px rgba(0, 0, 0, .9); }
.wide { letter-spacing: .35px; }
.api { letter-spacing: .15px; }
.fail { letter-spacing: .9px; }
.mid { height: 90px; padding-bottom: 25px; }
.big { height: 453px; padding-bottom: 25px; }
.last { height: 140px; align-items: start; }
.up { padding-bottom: 19px; }
.tight { display: flex; flex-direction: column; align-items: flex-start; }
button { display: block; height: 18px; padding: 0; border: 1px solid #9c9c9c; border-radius: 4px; background: linear-gradient(#fff, #f3f3f3 50%, #e6e6e6 51%, #f1f1f1); color: #000; font: 11px/14px "Noto Sans", sans-serif; white-space: nowrap; padding-bottom: 1px; }
.b-install { width: 48px; }
.b-vib { width: 54px; }
.b-stop { width: 39px; }
.b-full { width: 69px; margin: 1px 0 20px 2px; letter-spacing: .1px; }
.b-exit { width: 51px; margin: 0 0 21px 2px; }
.b-fsv { width: 61px; margin: 7px 0 0 2px; }
.media { align-self: start; }
.media p { margin: 0 0 19px; }
.video { width: 320px; height: 240px; background: #000; display: flex; flex-direction: column; justify-content: flex-end; padding: 5px; }
.controls { height: 30px; border-radius: 4px; background: #111; display: flex; align-items: center; padding-left: 16px; }
.c-play { margin-right: 16px; }
.seek { width: 91px; height: 8px; border: 1px solid #4b4b4b; border-radius: 4px; display: flex; align-items: center; margin-right: 14px; }
.seek i { margin-left: -1px; width: 20px; height: 12px; flex: none; border-radius: 6px; background: linear-gradient(#fff, #ddd); }
.clock { width: 43px; color: #fff; font: 700 12px/18px "DejaVu Sans", sans-serif; letter-spacing: -.9px; }
.c-vol { margin-right: 12px; }
.level { width: 31px; height: 8px; border-radius: 4px; background: #cfcfcf; display: flex; align-items: center; justify-content: flex-end; margin-right: 16px; }
.level i { width: 12px; height: 12px; border-radius: 50%; background: #f5f5f5; }
.pick { display: flex; align-items: center; gap: 5px; padding: 5px 0 0 2px; font: 11px/16px "Noto Sans", sans-serif; }
.b-file { width: 77px; letter-spacing: .1px; }
.pick span { letter-spacing: .15px; }
.wall-right { flex: 1; background: linear-gradient(#541812, #6b2018 30px, #8c3526 150px, #874428 357px, #0a0738 358px, #0a0738 374px, #08608f 375px, #0a5484 418px, #86a9a8 419px, #7fa3a5 500px, #4e96a8 620px, #3f7f95 820px, #2c6c86); }
```
